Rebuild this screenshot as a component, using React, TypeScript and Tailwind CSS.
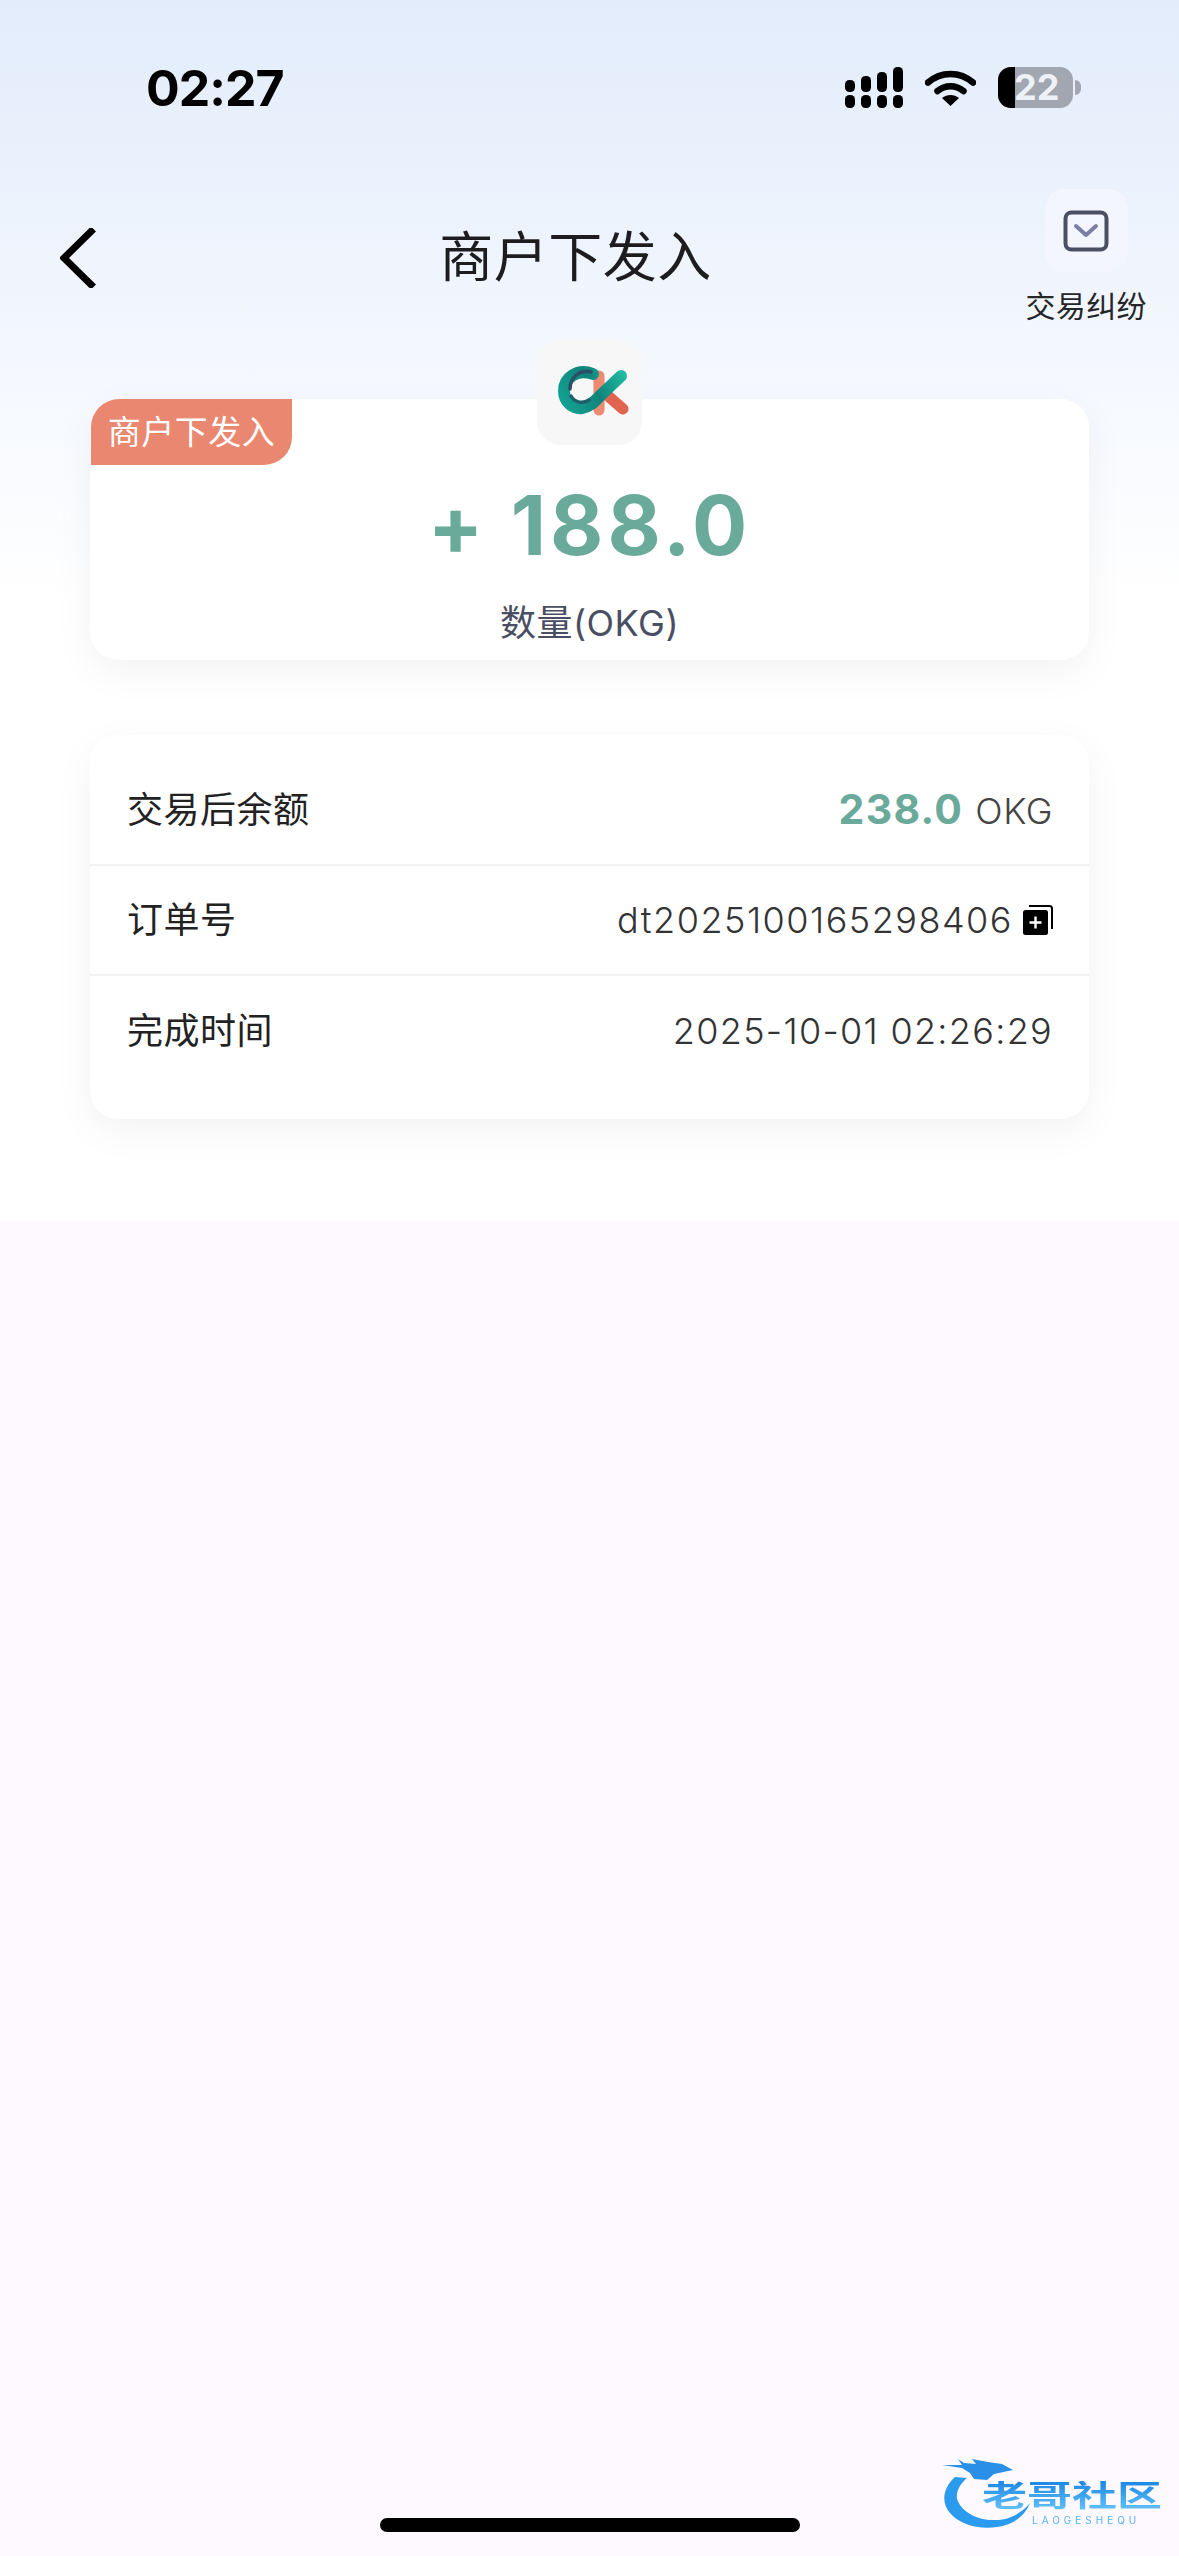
function StatusIcons() {
  return (
    <div className="flex items-center">
      <svg width="58" height="41" viewBox="0 0 58 41" fill="black">
        <rect x="0" y="28" width="10" height="13" rx="4.5" />
        <rect x="16" y="28" width="10" height="13" rx="4.5" />
        <rect x="32" y="28" width="10" height="13" rx="4.5" />
        <rect x="48" y="28" width="10" height="13" rx="4.5" />
        <rect x="0" y="13" width="10" height="12" rx="4.5" />
        <rect x="16" y="9" width="10" height="16" rx="4.5" />
        <rect x="32" y="5" width="10" height="20" rx="4.5" />
        <rect x="48" y="0" width="10" height="25" rx="4.5" />
      </svg>
      <svg className="ml-[22px]" width="51" height="37" viewBox="0 0 51 37">
        <path d="M3 13.5 C16 2 35 2 48 13.5" fill="none" stroke="black" strokeWidth="6.5" strokeLinecap="round" />
        <path d="M12.5 22 C20 15.5 31 15.5 38.5 22" fill="none" stroke="black" strokeWidth="6.5" strokeLinecap="round" />
        <path d="M17 29 C22 25 29 25 34 29 L25.5 37 Z" fill="black" />
      </svg>
      <div className="ml-[22px] flex items-center">
        <div className="w-[75px] h-[41px] rounded-[13px] bg-[#a2a6b0] flex items-center relative">
          <div className="w-[17px] h-full bg-black rounded-l-[13px]" />
          <span className="ml-[-1px] text-[36px] leading-[41px] font-bold text-[#eef1f8]">22</span>
        </div>
        <div className="w-[6px] h-[15px] ml-[2px] rounded-r-full bg-[#a2a6b0]" />
      </div>
    </div>
  )
}

function Logo() {
  return (
    <svg width="105" height="105" viewBox="0 0 105 105" fill="none">
      <defs>
        <linearGradient id="tealRing" x1="20" y1="70" x2="88" y2="30" gradientUnits="userSpaceOnUse">
          <stop offset="0" stopColor="#14a896" />
          <stop offset="0.55" stopColor="#10847c" />
          <stop offset="1" stopColor="#22bfa3" />
        </linearGradient>
      </defs>
      <path d="M62 36 L62 70" stroke="#ec8a72" strokeWidth="11" strokeLinecap="round" />
      <path d="M70 55 L86 69" stroke="#e0644f" strokeWidth="11" strokeLinecap="round" />
      <path d="M56 34 C40 28 27 38 27 51 C27 63 37 69 45 68 C53 67 58 61 64 55 L84 36" stroke="url(#tealRing)" strokeWidth="12" strokeLinecap="round" />
      <path d="M54 32 C42 29 33 38 33 49" stroke="#2b4f66" strokeWidth="3.5" strokeLinecap="round" />
      <path d="M34 56 C38 63 46 64 52 60" stroke="#1d5f6b" strokeWidth="3.5" strokeLinecap="round" />
    </svg>
  )
}

function CopyIcon() {
  return (
    <svg width="30" height="30" viewBox="0 0 30 30">
      <path d="M6 1 H26.5 Q29 1 29 3.5 V24" fill="none" stroke="black" strokeWidth="2" />
      <rect x="0" y="5" width="25" height="25" rx="2.5" fill="black" />
      <path d="M12.5 11.5 V23.5 M6.5 17.5 H18.5" stroke="white" strokeWidth="2.4" />
    </svg>
  )
}

function Row({ label, children, border }: { label: string; children: React.ReactNode; border?: boolean }) {
  return (
    <div className={`h-[110px] pl-[37px] pr-[36px] flex items-center justify-between ${border ? 'border-b-2 border-[#f1f1f3]' : ''}`}>
      <span className="text-[36px] text-[#222] tracking-[0.5px]">{label}</span>
      {children}
    </div>
  )
}

export default function App() {
  return (
    <div
      className="w-[1179px] h-[2556px] flex flex-col bg-[#fdf9ff] overflow-hidden"
      style={{ fontFamily: 'Inter, "Noto Sans CJK SC", sans-serif' }}
    >
      <div className="h-[1222px] bg-[linear-gradient(180deg,#e2ecfb_0px,#f3f7fe_340px,#ffffff_600px)] px-[90px]">
        {/* status bar */}
        <div className="h-[189px] -mx-[90px] pl-[146px] pr-[98px] pt-[67px] flex justify-between items-start">
          <span className="text-[50px] leading-[42px] font-bold text-black tracking-[-1px]">02:27</span>
          <StatusIcons />
        </div>

        {/* nav */}
        <div className="-mx-[90px] h-[150px] pl-[60px] pr-[32px] flex items-start justify-between relative">
          <svg className="mt-[39px]" width="36" height="60" viewBox="0 0 36 60" fill="none">
            <path d="M33.5 1 L4 30 L33.5 59" stroke="black" strokeWidth="7" />
          </svg>
          <span className="absolute left-0 right-[28px] top-[36px] text-center text-[54px] leading-[66px] text-[#1d1d1f] tracking-[0.5px]">商户下发入</span>
          <div className="flex flex-col items-center">
            <div className="w-[83px] h-[83px] rounded-[20px] bg-[#f3f6fe] flex items-center justify-center">
              <svg width="46" height="42" viewBox="0 0 46 42" fill="none">
                <rect x="2.5" y="2.5" width="41" height="37" rx="6" stroke="#4b4f63" strokeWidth="4" />
                <path d="M13 16 L23 25 L33 16" stroke="#7a7fa3" strokeWidth="4" strokeLinecap="round" strokeLinejoin="round" />
              </svg>
            </div>
            <span className="text-[30px] leading-[40px] mt-[14px] text-[#26262a] tracking-[0.4px]">交易纠纷</span>
          </div>
        </div>

        {/* amount card */}
        <div className="relative mt-[60px] h-[261px] rounded-[28px] bg-white shadow-[0_12px_40px_rgba(0,0,0,0.05)] flex flex-col items-center">
          <div className="absolute left-px top-0 h-[66px] w-[201px] pt-[2px] rounded-tl-[28px] rounded-br-[28px] bg-[#ea8770] flex items-center justify-center text-[33px] text-white tracking-[0.5px]">
            商户下发入
          </div>
          <div className="absolute left-[447px] -top-[59px] w-[105px] h-[105px] rounded-[24px] bg-[#f7f7f7]">
            <Logo />
          </div>
          <span className="mt-[77px] text-[82px] leading-[100px] font-bold text-[#6aaa9a] tracking-[4px]">+ 188.0</span>
          <span className="mt-[25px] text-[36px] leading-[44px] text-[#4a4e63] tracking-[0.5px]">数量(OKG)</span>
        </div>

        {/* details card */}
        <div className="mt-[75px] pt-[21px] h-[384px] rounded-[28px] bg-white shadow-[0_12px_40px_rgba(0,0,0,0.05)]">
          <Row label="交易后余额" border>
            <span className="flex items-baseline">
              <span className="text-[41px] font-bold text-[#6aaa9a] tracking-[1.3px]">238.0</span>
              <span className="ml-[12px] text-[36px] font-light text-[#444] tracking-[0.5px]">OKG</span>
            </span>
          </Row>
          <Row label="订单号" border>
            <span className="flex items-center text-[36px] font-light text-[#333] tracking-[1.5px]">
              dt2025100165298406
              <span className="ml-[10px] flex"><CopyIcon /></span>
            </span>
          </Row>
          <Row label="完成时间">
            <span className="text-[36px] font-light text-[#333] tracking-[1.3px]">2025-10-01 02:26:29</span>
          </Row>
        </div>
      </div>

      {/* lower empty area */}
      <div className="flex-1 relative flex flex-col items-center justify-end pb-[24px]">
        <div className="w-[420px] h-[14px] rounded-full bg-black" />
        <div className="absolute left-[940px] top-[1231px] w-[224px] h-[76px] blur-[0.5px]">
          <svg className="absolute left-0 top-0" width="100" height="76" viewBox="0 0 100 76" fill="none">
            <path d="M15 24 C4 34 0 48 10 60 C22 74 46 78 66 72 C78 68 86 60 90 50 C82 60 68 68 53 67 C38 67 22 60 17 46 C16 38 20 31 27 25 Z" fill="#2a9bee" />
            <path d="M2 12 L22 15 L30 20 L34 26 L47 27 L54 21 L73 17 L62 11 L48 9 L32 6 L36 11 L24 10 L18 6 L22 12 Z" fill="#2a8fe6" />
          </svg>
          <span className="absolute left-[42px] top-[28px] text-[45px] leading-[45px] font-bold whitespace-nowrap origin-top scale-y-[0.65] bg-[linear-gradient(180deg,#1b86e4,#62c2f8)] bg-clip-text text-transparent">老哥社区</span>
          <span className="absolute left-[92px] top-[61px] text-[10px] leading-[12px] text-[#58b2f2] tracking-[4px] whitespace-nowrap">LAOGESHEQU</span>
        </div>
      </div>
    </div>
  )
}
